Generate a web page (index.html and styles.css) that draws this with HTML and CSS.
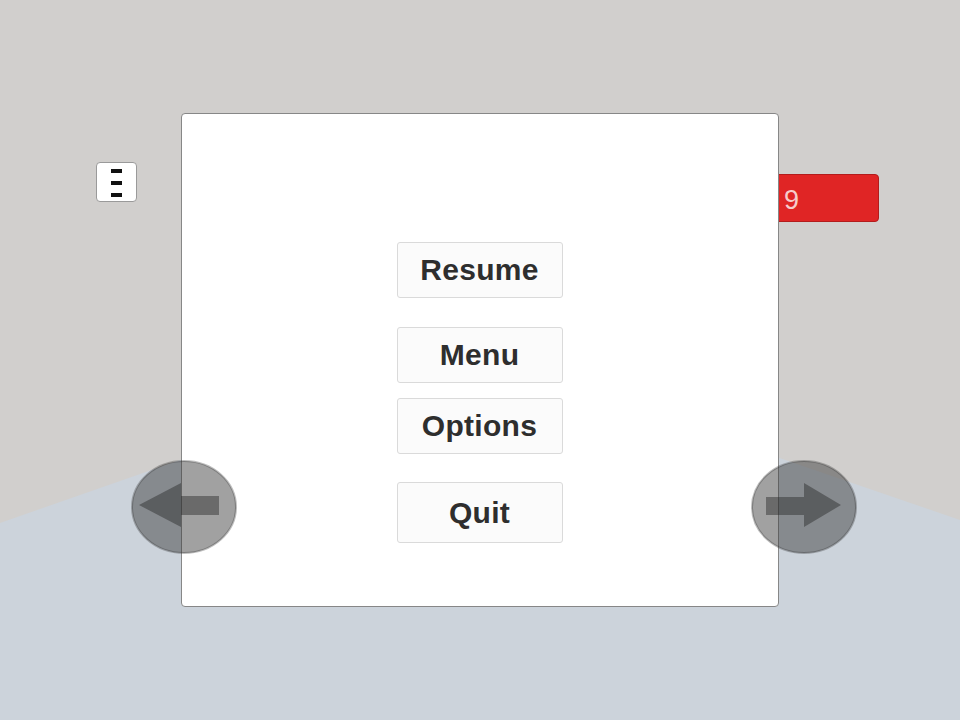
FILE: index.html
```html
<!DOCTYPE html>
<html lang="en">
<head>
    <meta charset="UTF-8">
    <title>Paused</title>
    <meta name="viewport" content="width=device-width, initial-scale=1.0">
    <link rel="stylesheet" href="styles.css">
</head>
<body>
<div class="scene">
    <div class="floor"></div>

    <!-- hud -->
    <div class="hud-menu">
        <span></span><span></span><span></span>
    </div>
    <div class="hud-score">9</div>

    <!-- pause dialog -->
    <div class="overlay">
        <div class="pause-panel">
            <p class="btn btn-resume">Resume</p>
            <p class="btn btn-menu">Menu</p>
            <p class="btn btn-options">Options</p>
            <p class="btn btn-quit">Quit</p>
        </div>
    </div>

    <!-- move controls -->
    <div class="pad pad-left">
        <svg width="106" height="94" viewBox="0 0 106 94">
            <ellipse cx="53" cy="47" rx="52" ry="46" fill="rgba(58,58,58,0.48)" stroke="rgba(40,40,40,0.3)" stroke-width="2"/>
            <polygon points="8,45 50,23 50,36 88,36 88,55 50,55 50,67" fill="rgba(40,40,40,0.45)"/>
        </svg>
    </div>
    <div class="pad pad-right">
        <svg width="106" height="94" viewBox="0 0 106 94">
            <ellipse cx="53" cy="47" rx="52" ry="46" fill="rgba(58,58,58,0.48)" stroke="rgba(40,40,40,0.3)" stroke-width="2"/>
            <polygon points="90,45 53,23 53,37 15,37 15,55 53,55 53,67" fill="rgba(40,40,40,0.45)"/>
        </svg>
    </div>
</div>
</body>
</html>
```

FILE: styles.css
```css
*{margin: 0;padding: 0;box-sizing: border-box;}
html,body{
    overflow: hidden;
    height: 100vh;
}
body{
    background-color: #d1cfcd;
    font-family: "Liberation Sans", Arial, sans-serif;
}
.scene{
    position: relative;
    width: 100vw;
    height: 100vh;
}
.floor{
    position: absolute;
    inset: 0;
    background-color: #ccd3db;
    clip-path: polygon(0 523px, 480px 355px, 960px 520px, 960px 720px, 0 720px);
}

/* hud */
.hud-menu{
    position: absolute;
    left: 96px;
    top: 162px;
    width: 41px;
    height: 40px;
    display: flex;
    flex-direction: column;
    align-items: center;
    padding-top: 6px;
    gap: 8px;
    background-color: #fff;
    border: 1px solid #9a9a9a;
    border-radius: 4px;
}
.hud-menu span{
    display: block;
    width: 11px;
    height: 4px;
    background-color: #111;
}
.hud-score{
    position: absolute;
    left: 762px;
    top: 174px;
    width: 117px;
    height: 48px;
    padding-left: 21px;
    line-height: 50px;
    font-size: 27px;
    color: #f6cccc;
    background-color: #e02525;
    border: 1px solid #b31c1c;
    border-radius: 4px;
}

/* pause dialog */
.overlay{
    position: absolute;
    inset: 0;
    display: flex;
    justify-content: center;
    align-items: center;
}
.pause-panel{
    display: flex;
    flex-direction: column;
    align-items: center;
    width: 598px;
    height: 494px;
    margin-left: -1px;
    padding-top: 128px;
    background-color: #fff;
    border: 1px solid #878787;
    border-radius: 4px;
}
.pause-panel .btn{
    display: flex;
    justify-content: center;
    align-items: center;
    width: 166px;
    height: 56px;
    font-size: 30px;
    font-weight: bold;
    letter-spacing: 0.3px;
    color: #2e2e2e;
    background-color: #fbfbfb;
    border: 1px solid #dadada;
    border-radius: 3px;
}
.pause-panel .btn-menu{margin-top: 29px;}
.pause-panel .btn-options{margin-top: 15px;}
.pause-panel .btn-quit{
    margin-top: 28px;
    height: 61px;
}

/* move controls */
.pad{
    position: absolute;
    top: 460px;
    width: 106px;
    height: 94px;
}
.pad svg{display: block;}
.pad-left{left: 131px;}
.pad-right{left: 751px;}
```
